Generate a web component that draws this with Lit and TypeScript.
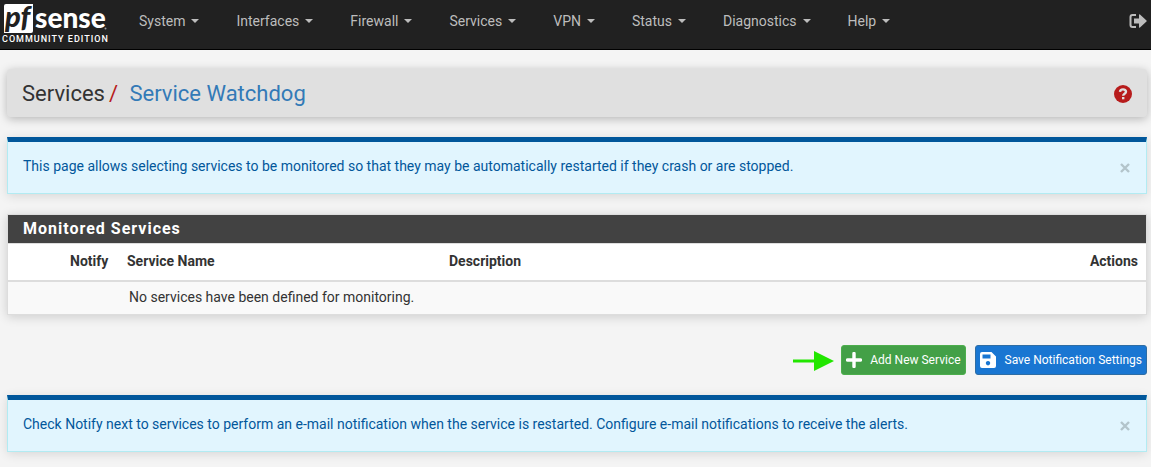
import { LitElement, html, css } from "lit";
import { customElement, property, state } from "lit/decorators.js";

const MENUS = ["System", "Interfaces", "Firewall", "Services", "VPN", "Status", "Diagnostics", "Help"];

@customElement("pf-navbar")
class PfNavbar extends LitElement {
  static styles = css`
    :host { display: block; }
    .bar {
      display: flex;
      align-items: center;
      height: 49px;
      background: #212121;
      border-bottom: 1px solid #000;
    }
    .brand { display: block; width: 108px; height: 49px; text-decoration: none; }
    .logo { display: block; overflow: visible; }
    .logo .name { font: 900 28px Lato, sans-serif; fill: #fff; }
    .logo .mark { font: italic 900 29px Lato, sans-serif; fill: #212121; }
    .logo .edition { font: 500 9px Roboto, sans-serif; letter-spacing: 1px; fill: #fff; }
    ul {
      display: flex;
      flex: 1;
      gap: 37px;
      margin: 0;
      padding: 0 0 8px 31px;
      list-style: none;
    }
    button {
      display: flex;
      align-items: center;
      gap: 6px;
      padding: 0;
      border: 0;
      background: none;
      color: #bdbdbd;
      font: 14px/20px Roboto, sans-serif;
      cursor: pointer;
    }
    .caret {
      border: 4px solid transparent;
      border-top-color: currentColor;
      border-bottom: 0;
    }
    .logout { display: flex; padding: 0 4px 8px 0; color: #bdbdbd; }
  `;

  render() {
    return html`
      <nav class="bar">
        <a class="brand" href="#" aria-label="pfSense Community Edition">
          <svg class="logo" width="108" height="49" viewBox="0 0 108 49">
            <path d="M6 4H33V31q0 2-2 2H4V6q0-2 2-2z" fill="#fff" />
            <text class="mark" x="5" y="27">pf</text>
            <text class="name" x="35" y="28">sense</text>
            <circle cx="105.500" cy="28.500" r="1" fill="#999" />
            <text class="edition" x="2" y="42">COMMUNITY EDITION</text>
          </svg>
        </a>
        <ul>
          ${MENUS.map((m) => html`<li><button aria-haspopup="true">${m}<span class="caret"></span></button></li>`)}
        </ul>
        <a class="logout" href="#" aria-label="Logout">
          <svg width="18" height="16" viewBox="0 0 18 16" fill="currentColor">
            <path d="M7 1H3.500A3 3 0 0 0 .5 4v8a3 3 0 0 0 3 3H7v-2H3.500a1 1 0 0 1-1-1V4a1 1 0 0 1 1-1H7z" />
            <path d="M5 5.500h5V2q0-1.200 1-.4l6.500 6q.5.400 0 .8l-6.500 6q-1 .8-1-.4v-3.500H5z" />
          </svg>
        </a>
      </nav>
    `;
  }
}

@customElement("pf-alert")
class PfAlert extends LitElement {
  @property() text = "";
  @state() closed = false;

  static styles = css`
    :host { display: block; }
    .alert {
      display: flex;
      align-items: center;
      justify-content: space-between;
      padding: 14px 15px 17px;
      border: 1px solid #b2ebf2;
      border-top: 5px solid #01579b;
      background: #e1f5fe;
      color: #01579b;
      box-shadow: 0 2px 10px rgba(0, 0, 0, 0.12);
      font: 14px/20px Roboto, sans-serif;
    }
    .close {
      display: flex;
      padding: 4px 1px 0 0;
      border: 0;
      background: none;
      color: #b3c4cb;
      cursor: pointer;
    }
  `;

  render() {
    if (this.closed) return null;
    return html`
      <div class="alert" role="alert">
        <span>${this.text}</span>
        <button class="close" aria-label="Close" @click=${() => (this.closed = true)}>
          <svg width="10" height="10" viewBox="0 0 10 10">
            <path d="M1 1l8 8M9 1l-8 8" stroke="currentColor" stroke-width="2.400" />
          </svg>
        </button>
      </div>
    `;
  }
}

@customElement("app-root")
class AppRoot extends LitElement {
  static styles = css`
    :host {
      display: block;
      min-height: 100vh;
      background: #f4f4f4;
      color: #333;
      font: 14px/20px Roboto, sans-serif;
    }
    main { padding: 19px 4px 15px 7px; }
    .crumbs {
      display: flex;
      align-items: center;
      justify-content: space-between;
      padding: 10px 15px 8px;
      border-radius: 4px;
      background: #e0e0e0;
      box-shadow: 0 2px 10px rgba(0, 0, 0, 0.26);
    }
    h1 { margin: 0; font-size: 22px; line-height: 30px; font-weight: 400; }
    h1 .slash { margin: 0 6px 0 4px; color: #b71c1c; }
    h1 a { color: #337ab7; text-decoration: none; }
    .help { display: flex; }
    pf-alert { margin-top: 20px; }
    .panel {
      margin-top: 20px;
      border: 1px solid #ddd;
      background: #fff;
      box-shadow: 0 2px 10px rgba(0, 0, 0, 0.16);
    }
    h2 {
      margin: 0;
      padding: 4px 15px;
      border-bottom: 1px solid #ddd;
      background: #424242;
      color: #fff;
      font-size: 16px;
      line-height: 20px;
      font-weight: 700;
      letter-spacing: 1px;
    }
    table { width: 100%; border-collapse: collapse; table-layout: fixed; }
    th { box-sizing: border-box; padding: 7px 8px 9px; text-align: left; font-weight: 700; }
    thead tr { border-bottom: 2px solid #ddd; }
    td { padding: 5px 10px 7px; background: #f9f9f9; }
    th.end { text-align: right; }
    .pick { width: 54px; }
    .notify { width: 57px; }
    .name { width: 322px; }
    .actions {
      display: flex;
      justify-content: flex-end;
      align-items: center;
      gap: 9px;
      margin-top: 30px;
    }
    .arrow { overflow: visible; }
    .btn {
      display: flex;
      align-items: center;
      gap: 8px;
      height: 30px;
      padding: 0 4px;
      border: 1px solid;
      border-radius: 3px;
      color: #fff;
      font: 12px/18px Roboto, sans-serif;
      cursor: pointer;
    }
    .add { background: #43a047; border-color: #4cae4c; }
    .save { background: #1976d2; border-color: #2e6da4; }
  `;

  render() {
    return html`
      <pf-navbar></pf-navbar>
      <main>
        <header class="crumbs">
          <h1>Services<span class="slash">/ </span><a href="#">Service Watchdog</a></h1>
          <a class="help" href="#" aria-label="Help">
            <svg width="18" height="18" viewBox="0 0 18 18">
              <circle cx="9" cy="9" r="9" fill="#b71c1c" />
              <path d="M6 6.900C6.200 3.500 12 3.500 12 6.800c0 2-2.800 2-2.800 4" fill="none" stroke="#e0e0e0" stroke-width="2.400" />
              <path d="M8 12h2.400v2.300H8z" fill="#e0e0e0" />
            </svg>
          </a>
        </header>

        <pf-alert
          text="This page allows selecting services to be monitored so that they may be automatically restarted if they crash or are stopped."
        ></pf-alert>

        <section class="panel">
          <h2>Monitored Services</h2>
          <table>
            <thead>
              <tr>
                <th class="pick"></th>
                <th class="notify">Notify</th>
                <th class="name">Service Name</th>
                <th>Description</th>
                <th class="end">Actions</th>
              </tr>
            </thead>
            <tbody>
              <tr>
                <td></td>
                <td></td>
                <td colspan="3">No services have been defined for monitoring.</td>
              </tr>
            </tbody>
          </table>
        </section>

        <div class="actions">
          <svg class="arrow" width="41" height="22" viewBox="0 0 41 22" fill="#22e600" aria-hidden="true">
            <path d="M2 10.500h21V2l20 10-20 10v-8.500H2z" />
          </svg>
          <button class="btn add">
            <svg width="16" height="16" viewBox="0 0 16 16" aria-hidden="true">
              <path d="M8 1.500v13M1.500 8h13" stroke="#fff" stroke-width="3.400" stroke-linecap="round" />
            </svg>
            Add New Service
          </button>
          <button class="btn save">
            <svg width="17" height="16" viewBox="0 0 17 16" aria-hidden="true">
              <path fill="#fff" fill-rule="evenodd" d="M2 0h9.500L16 4.500V14a2 2 0 0 1-2 2H2a2 2 0 0 1-2-2V2a2 2 0 0 1 2-2zM2.500 2.500v4h8v-4zM8 9a2.200 2.200 0 1 0 .01 0z" />
            </svg>
            Save Notification Settings
          </button>
        </div>

        <pf-alert
          text="Check Notify next to services to perform an e-mail notification when the service is restarted. Configure e-mail notifications to receive the alerts."
        ></pf-alert>
      </main>
    `;
  }
}
